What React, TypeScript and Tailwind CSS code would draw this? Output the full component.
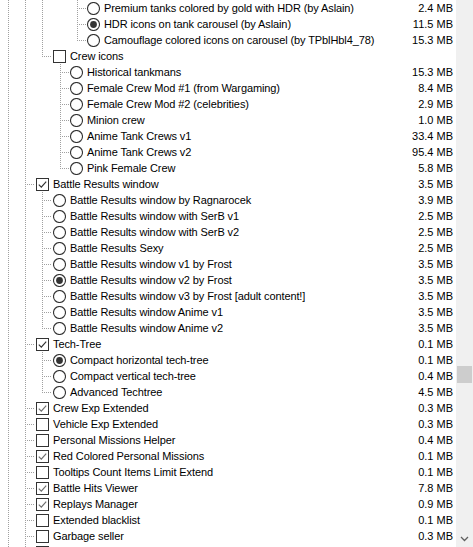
import React from "react";

type Row = {
  level: number;
  kind: "check" | "radio";
  on?: boolean;
  dim?: boolean;
  label: string;
  size?: string;
};

// x of the dotted guide for each level, and x of the box for each level
const lineX = [8, 25, 42, 60, 77];
const boxX = [19, 36, 53, 70, 87];

const rows: Row[] = [
  { level: 4, kind: "radio", label: "Premium tanks colored by gold with HDR (by Aslain)", size: "2.4 MB" },
  { level: 4, kind: "radio", on: true, label: "HDR icons on tank carousel (by Aslain)", size: "11.5 MB" },
  { level: 4, kind: "radio", label: "Camouflage colored icons on carousel (by TPblHbl4_78)", size: "15.3 MB" },
  { level: 2, kind: "check", label: "Crew icons" },
  { level: 3, kind: "radio", label: "Historical tankmans", size: "15.3 MB" },
  { level: 3, kind: "radio", label: "Female Crew Mod #1 (from Wargaming)", size: "8.4 MB" },
  { level: 3, kind: "radio", label: "Female Crew Mod #2 (celebrities)", size: "2.9 MB" },
  { level: 3, kind: "radio", label: "Minion crew", size: "1.0 MB" },
  { level: 3, kind: "radio", label: "Anime Tank Crews v1", size: "33.4 MB" },
  { level: 3, kind: "radio", label: "Anime Tank Crews v2", size: "95.4 MB" },
  { level: 3, kind: "radio", label: "Pink Female Crew", size: "5.8 MB" },
  { level: 1, kind: "check", on: true, label: "Battle Results window", size: "3.5 MB" },
  { level: 2, kind: "radio", label: "Battle Results window by Ragnarocek", size: "3.9 MB" },
  { level: 2, kind: "radio", label: "Battle Results window with SerB v1", size: "2.5 MB" },
  { level: 2, kind: "radio", label: "Battle Results window with SerB v2", size: "2.5 MB" },
  { level: 2, kind: "radio", label: "Battle Results Sexy", size: "2.5 MB" },
  { level: 2, kind: "radio", label: "Battle Results window v1 by Frost", size: "3.5 MB" },
  { level: 2, kind: "radio", on: true, label: "Battle Results window v2 by Frost", size: "3.5 MB" },
  { level: 2, kind: "radio", label: "Battle Results window v3 by Frost [adult content!]", size: "3.5 MB" },
  { level: 2, kind: "radio", label: "Battle Results window Anime v1", size: "3.5 MB" },
  { level: 2, kind: "radio", label: "Battle Results window Anime v2", size: "3.5 MB" },
  { level: 1, kind: "check", on: true, label: "Tech-Tree", size: "0.1 MB" },
  { level: 2, kind: "radio", on: true, label: "Compact horizontal tech-tree", size: "0.1 MB" },
  { level: 2, kind: "radio", label: "Compact vertical tech-tree", size: "0.4 MB" },
  { level: 2, kind: "radio", label: "Advanced Techtree", size: "4.5 MB" },
  { level: 1, kind: "check", on: true, dim: true, label: "Crew Exp Extended", size: "0.3 MB" },
  { level: 1, kind: "check", label: "Vehicle Exp Extended", size: "0.3 MB" },
  { level: 1, kind: "check", label: "Personal Missions Helper", size: "0.4 MB" },
  { level: 1, kind: "check", on: true, dim: true, label: "Red Colored Personal Missions", size: "0.1 MB" },
  { level: 1, kind: "check", label: "Tooltips Count Items Limit Extend", size: "0.1 MB" },
  { level: 1, kind: "check", on: true, dim: true, label: "Battle Hits Viewer", size: "7.8 MB" },
  { level: 1, kind: "check", on: true, dim: true, label: "Replays Manager", size: "0.9 MB" },
  { level: 1, kind: "check", label: "Extended blacklist", size: "0.1 MB" },
  { level: 1, kind: "check", label: "Garbage seller", size: "0.3 MB" },
  { level: 1, kind: "check", label: "" },
];

// does the branch at level k still go on below row i?
function continues(i: number, k: number) {
  for (let j = i + 1; j < rows.length; j++) {
    if (rows[j].level <= k) return rows[j].level === k;
  }
  return k <= 1;
}

function Guides({ i }: { i: number }) {
  const { level } = rows[i];
  const w = boxX[level];
  const own = lineX[level] + 0.5;
  return (
    <svg width={w} height={16} className="shrink-0" shapeRendering="crispEdges">
      <g stroke="#a0a0a0" strokeWidth={1} strokeDasharray="1 1">
        {lineX.slice(0, level).map((x, k) =>
          continues(i, k) ? <line key={k} x1={x + 0.5} y1={0} x2={x + 0.5} y2={16} /> : null
        )}
        <line x1={own} y1={0} x2={own} y2={continues(i, level) ? 16 : 9} />
        <line x1={lineX[level] + 2} y1={8.5} x2={w - 1} y2={8.5} />
      </g>
    </svg>
  );
}

function Box({ row }: { row: Row }) {
  if (row.kind === "radio") {
    return (
      <svg width={13} height={13} className="mt-[2px] shrink-0 self-start">
        <circle cx={6.5} cy={6.5} r={6} fill="#fff" stroke="#333" strokeWidth={1.1} />
        {row.on && <circle cx={6.5} cy={6.5} r={3.4} fill="#333" />}
      </svg>
    );
  }
  return (
    <svg width={13} height={13} className="mt-[2px] shrink-0 self-start">
      <rect x={0.5} y={0.5} width={12} height={12} fill="#fff" stroke="#333" shapeRendering="crispEdges" />
      {row.on && (
        <path
          d="M2.8 6.6 L5.3 9.1 L10.2 3.6"
          fill="none"
          stroke={row.dim ? "#6e6e6e" : "#333"}
          strokeWidth={1.2}
        />
      )}
    </svg>
  );
}

export default function App() {
  return (
    <div
      className="flex h-[547px] w-[473px] overflow-hidden bg-white text-[11px] leading-4 text-black"
      style={{ fontFamily: '"Liberation Sans", Arial, sans-serif' }}
    >
      <div className="w-[456px] shrink-0">
        {rows.map((row, i) => (
          <div key={i} className="flex h-4 items-start">
            <Guides i={i} />
            <Box row={row} />
            <span className="ml-[4px] whitespace-nowrap tracking-[-0.1px]">{row.label}</span>
            {row.size && (
              <span className="ml-auto pr-[3px] whitespace-nowrap">{row.size}</span>
            )}
          </div>
        ))}
      </div>
      <div className="flex w-[17px] flex-col bg-[#f0f0f0]">
        <div className="flex-1 pt-[366px]">
          <div className="mx-[1px] h-[17px] bg-[#cdcdcd]" />
        </div>
        <div className="flex h-[17px] items-center justify-center">
          <svg width={9} height={6} viewBox="0 0 9 6">
            <path d="M1 1 L4.5 4.5 L8 1" fill="none" stroke="#606060" strokeWidth={1.3} />
          </svg>
        </div>
      </div>
    </div>
  );
}
